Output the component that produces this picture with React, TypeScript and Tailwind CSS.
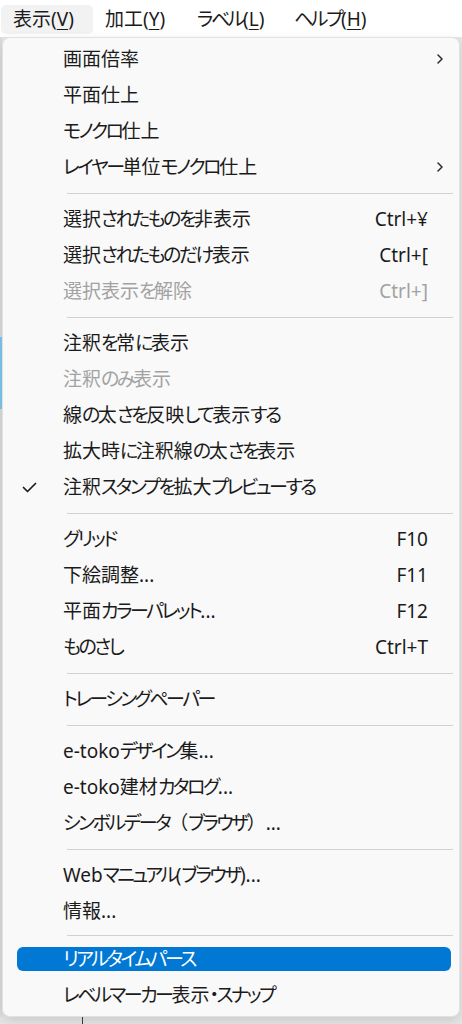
import React from "react";

type Entry =
  | { kind: "sep" }
  | {
      kind: "item";
      label: string;
      shortcut?: string;
      sub?: boolean;
      disabled?: boolean;
      checked?: boolean;
      active?: boolean;
    };

const sep: Entry = { kind: "sep" };
const it = (label: string, extra: Partial<Omit<Extract<Entry, { kind: "item" }>, "kind" | "label">> = {}): Entry => ({
  kind: "item",
  label,
  ...extra,
});

const entries: Entry[] = [
  it("画面倍率", { sub: true }),
  it("平面仕上"),
  it("モノクロ仕上"),
  it("レイヤー単位モノクロ仕上", { sub: true }),
  sep,
  it("選択されたものを非表示", { shortcut: "Ctrl+¥" }),
  it("選択されたものだけ表示", { shortcut: "Ctrl+[" }),
  it("選択表示を解除", { shortcut: "Ctrl+]", disabled: true }),
  sep,
  it("注釈を常に表示"),
  it("注釈のみ表示", { disabled: true }),
  it("線の太さを反映して表示する"),
  it("拡大時に注釈線の太さを表示"),
  it("注釈スタンプを拡大プレビューする", { checked: true }),
  sep,
  it("グリッド", { shortcut: "F10" }),
  it("下絵調整...", { shortcut: "F11" }),
  it("平面カラーパレット...", { shortcut: "F12" }),
  it("ものさし", { shortcut: "Ctrl+T" }),
  sep,
  it("トレーシングペーパー"),
  sep,
  it("e-tokoデザイン集..."),
  it("e-toko建材カタログ..."),
  it("シンボルデータ（ブラウザ）..."),
  sep,
  it("Webマニュアル(ブラウザ)..."),
  it("情報..."),
  sep,
  it("リアルタイムパース", { active: true }),
  it("レベルマーカー表示・スナップ"),
];

const bar = [
  { label: "表示", key: "V", w: "w-[92px]", hover: true },
  { label: "加工", key: "Y", w: "w-[92px]" },
  { label: "ラベル", key: "L", w: "w-[97px]" },
  { label: "ヘルプ", key: "H", w: "w-[110px]" },
];

// kana are set tighter (Yu Gothic UI style proportional kana)
function Jp({ text }: { text: string }) {
  const parts = text.split(/([\u3040-\u30ff]+|[（）])/).filter(Boolean);
  return (
    <>
      {parts.map((p, i) =>
        /^[\u3040-\u30ff]+$/.test(p) ? (
          <span key={i} className="tracking-[-2.5px]">
            {p}
          </span>
        ) : /^[（）]$/.test(p) ? (
          <span key={i} className="[font-feature-settings:normal]">
            {p}
          </span>
        ) : (
          <span key={i}>{p}</span>
        )
      )}
    </>
  );
}

function Check() {
  return (
    <svg width="15" height="11" viewBox="0 0 15 11" fill="none">
      <path d="M1.5 5.5 L5.5 9.5 L13.5 1.5" stroke="#1b1b1b" strokeWidth="1.7" strokeLinecap="round" strokeLinejoin="round" />
    </svg>
  );
}

function Chevron() {
  return (
    <svg width="6" height="10" viewBox="0 0 6 10" fill="none">
      <path d="M1 1 L5 5 L1 9" stroke="#2a2a2a" strokeWidth="1.5" strokeLinecap="round" strokeLinejoin="round" />
    </svg>
  );
}

export default function App() {
  return (
    <div className="flex h-[1024px] w-[462px] flex-col overflow-hidden bg-white font-['Noto_Sans','Noto_Sans_CJK_JP',sans-serif] text-[19px] text-[#1b1b1b] [font-feature-settings:'palt']">
      {/* menu bar */}
      <div className="flex h-[37px] shrink-0 items-start pt-[5px] pl-px">
        {bar.map((b) => (
          <div
            key={b.key}
            className={`flex h-[29px] items-center rounded-[5px] pl-3 ${b.w} ${b.hover ? "bg-[#f2f2f2]" : ""}`}
          >
            <span className="leading-none">
              <Jp text={b.label} />(<span className="underline underline-offset-[3px]">{b.key}</span>)
            </span>
          </div>
        ))}
      </div>

      {/* area under the menu */}
      <div className="flex min-h-0 flex-1 flex-col bg-[#e6e6e6]">
        <div className="flex min-h-0 flex-1">
          <div className="flex w-[2px] shrink-0 flex-col bg-[#dcdcdc]">
            <div className="h-[300px]" />
            <div className="h-[72px] bg-[#7cc8ef]" />
          </div>
          <div className="mr-[2px] flex flex-1 flex-col rounded-[8px] border border-[#e2e2e2] bg-[#f9f9f9] py-[3px] shadow-[0_4px_12px_rgba(0,0,0,0.12)]">
            {entries.map((e, i) => {
              if (e.kind === "sep") {
                const last = i === entries.length - 3;
                return (
                  <div key={i} className={`ml-[64px] mr-[6px] flex items-center ${last ? "h-[12px]" : "h-[16px]"}`}>
                    <div className="h-px flex-1 bg-[#d2d2d2]" />
                  </div>
                );
              }
              return (
                <div key={i} className={`flex h-[36px] shrink-0 ${e.active ? "py-[6px]" : ""}`}>
                  <div
                    className={`ml-[14px] mr-[8px] flex flex-1 items-center rounded-[6px] ${
                      e.active ? "bg-[#0078d4] text-white" : ""
                    } ${e.disabled ? "text-[#a2a2a2]" : ""}`}
                  >
                    <span className="flex w-[46px] shrink-0 items-center pl-[5px]">{e.checked && <Check />}</span>
                    <span className="flex-1 whitespace-nowrap leading-none">
                      <Jp text={e.label} />
                    </span>
                    {e.shortcut && <span className="whitespace-nowrap leading-none">{e.shortcut}</span>}
                    <span className="flex w-[23px] shrink-0 items-center pl-[9px]">{e.sub && <Chevron />}</span>
                  </div>
                </div>
              );
            })}
          </div>
        </div>
        <div className="flex h-[7px] shrink-0">
          <div className="ml-[82px] w-px bg-[#3a3a3a]" />
        </div>
      </div>
    </div>
  );
}
